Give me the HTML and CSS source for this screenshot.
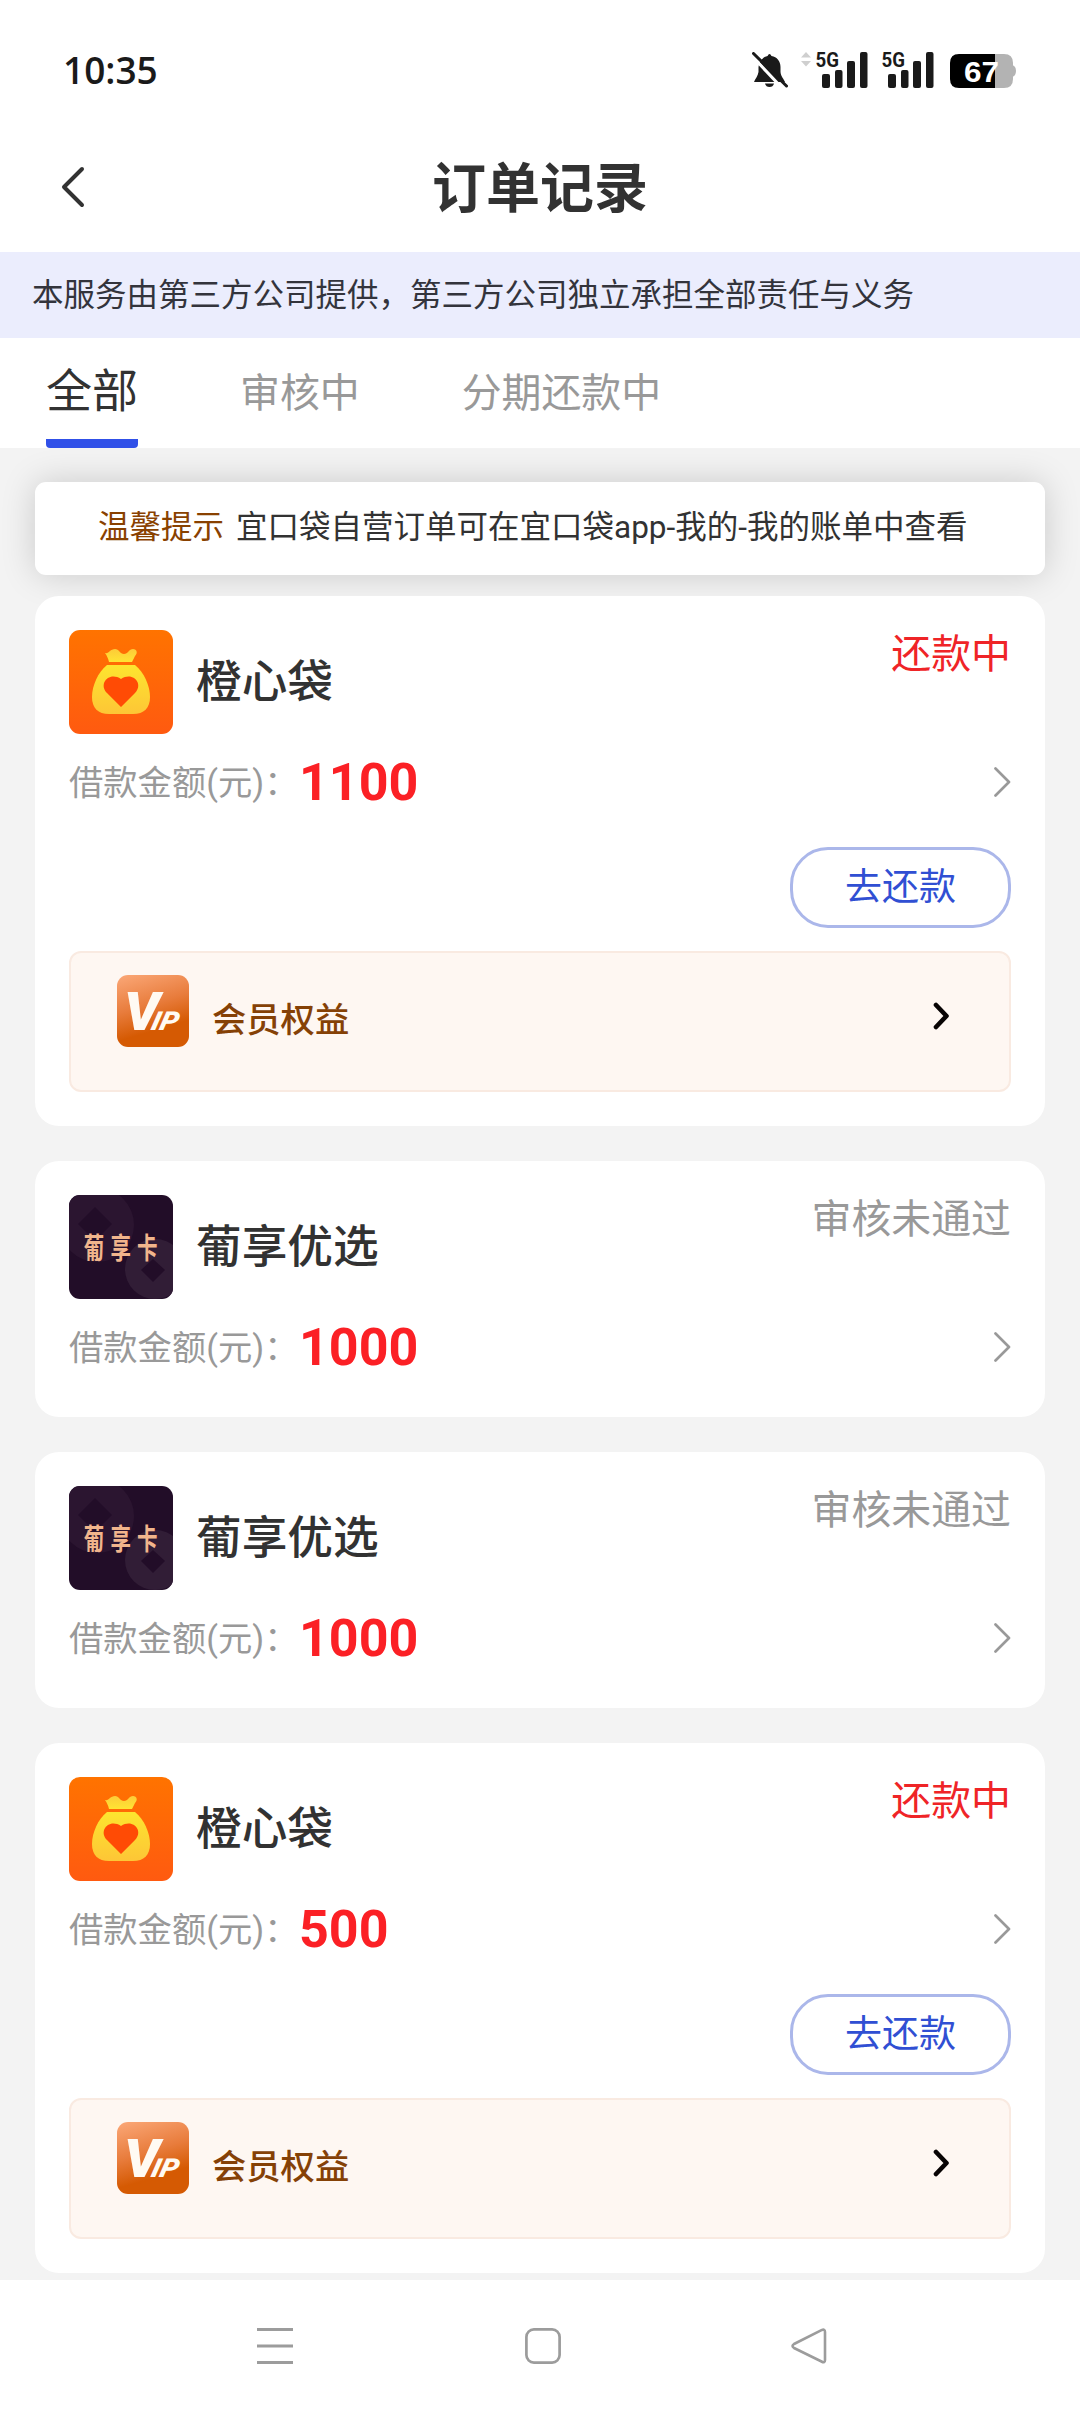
FILE: index.html
```html
<!DOCTYPE html>
<html lang="zh-CN">
<head>
<meta charset="utf-8">
<title>订单记录</title>
<link rel="stylesheet" href="styles.css">
</head>
<body>
<svg class="defs" width="0" height="0">
  <defs>
    <linearGradient id="orange" x1="0" y1="0" x2="0" y2="1"><stop offset="0" stop-color="#ff7300"/><stop offset="1" stop-color="#ff5a10"/></linearGradient>
    <linearGradient id="gold" x1="0" y1="0" x2="0" y2="1"><stop offset="0" stop-color="#fde52f"/><stop offset="1" stop-color="#fdc636"/></linearGradient>
    <linearGradient id="neck" x1="0" y1="0" x2="0" y2="1"><stop offset="0" stop-color="#fdcb38"/><stop offset="1" stop-color="#ffe433"/></linearGradient>
    <linearGradient id="copper" x1="0" y1="0" x2=".3" y2="1"><stop offset="0" stop-color="#fba878"/><stop offset=".5" stop-color="#e87c3c"/><stop offset=".85" stop-color="#d55a03"/></linearGradient>
    <clipPath id="tile"><rect width="104" height="104" rx="11"/></clipPath>
    <symbol id="logo-bag" viewBox="0 0 104 104">
      <rect width="104" height="104" rx="11" fill="url(#orange)"/>
      <path d="M36 23C40 24 41 19 46 19C50 19 51 24 55 24C59 24 60 19 64 19C68 19 69 23 66 26L63 32H40C39 28 38 26 36 23Z" fill="url(#neck)"/>
      <path d="M38 35H66C75 42 81 56 81 67C81 78 75 84 64 84H40C29 84 23 78 23 67C23 56 29 42 38 35Z" fill="url(#gold)"/>
      <path d="M52 77L38 63C29 54 40 41 52 49C64 41 75 54 66 63Z" fill="#ff4b05"/>
    </symbol>
    <symbol id="logo-card" viewBox="0 0 104 104">
      <g clip-path="url(#tile)">
        <rect width="104" height="104" fill="#220d28"/>
        <circle cx="28" cy="30" r="37" fill="#2b1530"/>
        <path d="M26 12L43 29L26 46L9 29Z" fill="#220d28"/>
        <circle cx="86" cy="74" r="30" fill="#311d36"/>
        <path d="M84 64L96 75L84 87L72 75Z" fill="#220d28"/>
      </g>
      <g class="logo-word" transform="translate(0 64) scale(.82 1.16)">
        <text x="18" y="0">葡</text><text x="50.500" y="0">享</text><text x="83" y="0">卡</text>
      </g>
    </symbol>
    <symbol id="logo-vip" viewBox="0 0 72 72">
      <rect width="72" height="72" rx="11" fill="url(#copper)"/>
      <text class="vip-v" transform="translate(7 55) scale(1.05 1)">V</text>
      <text class="vip-ip" transform="translate(33 55) skewX(-14) scale(1.1 1)">IP</text>
    </symbol>
    <symbol id="chevron" viewBox="0 0 17 30"><path d="M1.5 1.5L15 15L1.5 28.5" fill="none" stroke="#999" stroke-width="2.7" stroke-linecap="round" stroke-linejoin="round"/></symbol>
    <symbol id="chevron-bold" viewBox="0 0 17 28"><path d="M3 3L13.5 14L3 25" fill="none" stroke="#080404" stroke-width="4.6" stroke-linecap="round" stroke-linejoin="round"/></symbol>
    <symbol id="bars" viewBox="0 0 52 36">
      <g fill="#1a1a1a"><rect x="6" y="22" width="8" height="14" rx="2"/><rect x="19" y="18" width="7.5" height="18" rx="2"/><rect x="31" y="9" width="8" height="27" rx="2"/><rect x="44" y="0" width="7.5" height="36" rx="2"/></g>
      <text class="net" x="-.5" y="14.7" textLength="23.5" lengthAdjust="spacingAndGlyphs">5G</text>
    </symbol>
  </defs>
</svg>

<header class="statusbar">
  <span class="clock">10:35</span>
  <div class="indicators">
    <svg class="bell" width="36" height="36" viewBox="0 0 36 36">
      <path d="M2 30C3 27 6 24 6.500 20V15C7 9 11 5 15.500 4Q17.500 0 19.500 4C25 5 28.500 9 28.500 15V20C29 25 32 27 33 30Z" fill="#1a1a1a"/>
      <path d="M13 31.500H22Q21 35 17.500 35Q14 35 13 31.500Z" fill="#1a1a1a"/>
      <path d="M-1 3L31 37" stroke="#fff" stroke-width="3"/>
      <path d="M1.500 1.500L34.500 34" stroke="#1a1a1a" stroke-width="3" stroke-linecap="round"/>
    </svg>
    <svg class="traffic" width="10" height="15" viewBox="0 0 10 15"><path d="M0 5.500L5 0L10 5.500ZM0 9H10L5 14.500Z" fill="#cfcfcf"/></svg>
    <svg class="signal" width="52" height="36"><use href="#bars"/></svg>
    <svg class="signal signal-second" width="52" height="36"><use href="#bars"/></svg>
    <svg class="battery" width="67" height="34" viewBox="0 0 67 34">
      <path d="M62 11Q66 12 66 17Q66 22 62 23Z" fill="#b3b3b3"/>
      <path d="M45 0H54Q63 0 63 9V25Q63 34 54 34H45Z" fill="#b3b3b3"/>
      <path d="M9 0H45V34H9Q0 34 0 25V9Q0 0 9 0Z" fill="#000"/>
      <text class="charge" x="14" y="28" textLength="35" lengthAdjust="spacingAndGlyphs">67</text>
    </svg>
  </div>
</header>

<nav class="titlebar">
  <svg class="back" width="26" height="42" viewBox="0 0 26 42"><path d="M22 3L4 21L22 39" fill="none" stroke="#323232" stroke-width="4" stroke-linecap="round" stroke-linejoin="round"/></svg>
  <h1 class="title">订单记录</h1>
</nav>

<p class="notice">本服务由第三方公司提供，第三方公司独立承担全部责任与义务</p>

<div class="tabs">
  <span class="tab tab-active">全部</span>
  <span class="tab">审核中</span>
  <span class="tab">分期还款中</span>
</div>

<main class="content">
  <p class="tip"><span class="tip-label">温馨提示</span><span>宜口袋自营订单可在宜口袋app-我的-我的账单中查看</span></p>

  <section class="orders">
    <article class="card">
      <div class="card-head"><svg class="logo"><use href="#logo-bag"/></svg><h2 class="name">橙心袋</h2><span class="state state-due">还款中</span></div>
      <div class="amount-row"><span class="label">借款金额(元)：</span><strong class="amount">1100</strong><svg class="chevron"><use href="#chevron"/></svg></div>
      <button class="pay">去还款</button>
      <div class="vip"><svg class="vip-logo"><use href="#logo-vip"/></svg><span class="vip-text">会员权益</span><svg class="vip-chevron"><use href="#chevron-bold"/></svg></div>
    </article>

    <article class="card">
      <div class="card-head"><svg class="logo"><use href="#logo-card"/></svg><h2 class="name">葡享优选</h2><span class="state">审核未通过</span></div>
      <div class="amount-row"><span class="label">借款金额(元)：</span><strong class="amount">1000</strong><svg class="chevron"><use href="#chevron"/></svg></div>
    </article>

    <article class="card">
      <div class="card-head"><svg class="logo"><use href="#logo-card"/></svg><h2 class="name">葡享优选</h2><span class="state">审核未通过</span></div>
      <div class="amount-row"><span class="label">借款金额(元)：</span><strong class="amount">1000</strong><svg class="chevron"><use href="#chevron"/></svg></div>
    </article>

    <article class="card">
      <div class="card-head"><svg class="logo"><use href="#logo-bag"/></svg><h2 class="name">橙心袋</h2><span class="state state-due">还款中</span></div>
      <div class="amount-row"><span class="label">借款金额(元)：</span><strong class="amount">500</strong><svg class="chevron"><use href="#chevron"/></svg></div>
      <button class="pay">去还款</button>
      <div class="vip"><svg class="vip-logo"><use href="#logo-vip"/></svg><span class="vip-text">会员权益</span><svg class="vip-chevron"><use href="#chevron-bold"/></svg></div>
    </article>
  </section>
</main>

<footer class="navbar">
  <svg width="36" height="36" viewBox="0 0 36 36"><path d="M0 1.500H36M0 18H36M0 34.500H36" stroke="#9c9c9c" stroke-width="3"/></svg>
  <svg width="36" height="36" viewBox="0 0 36 36"><rect x="1.400" y="1.400" width="33.200" height="33.200" rx="7.500" fill="none" stroke="#9c9c9c" stroke-width="2.700"/></svg>
  <svg class="nav-back" width="36" height="36" viewBox="0 0 36 36"><path d="M30.500 2.200Q34 0.500 34 4V32Q34 35.500 30.500 33.500L3 20Q0 18 3 16Z" fill="none" stroke="#9c9c9c" stroke-width="2.600" stroke-linejoin="round"/></svg>
</footer>
</body>
</html>
```
FILE: styles.css
```css
* { box-sizing: border-box; }

body {
  display: flex;
  flex-direction: column;
  width: 1080px;
  height: 2412px;
  margin: 0;
  overflow: hidden;
  background: #fff;
  color: #323232;
  font-family: Roboto, "Noto Sans CJK SC", sans-serif;
}

h1, h2, p { margin: 0; }
svg { display: block; flex: none; }
.defs { position: absolute; }

/* System status bar */
.statusbar {
  display: flex;
  justify-content: space-between;
  height: 136px;
  padding: 52px 63px 0 63px;
}
.clock {
  height: 36px;
  color: #1a1a1a;
  font: 600 37px/35px "Open Sans", sans-serif;
}
.indicators { display: flex; align-items: flex-start; }
.traffic { margin-left: 13px; }
.signal { margin-left: 5px; overflow: visible; }
.signal-second { margin-left: 14px; }
.battery { margin: 2px 0 0 16px; }
.net { font: 700 21px Roboto, sans-serif; fill: #1a1a1a; }
.charge { font: 700 30px "Liberation Sans", sans-serif; fill: #fff; }

/* Page title */
.titlebar {
  display: grid;
  grid-template-columns: 1fr auto 1fr;
  align-items: center;
  height: 116px;
  padding: 0 60px 14px;
}
.title {
  padding-top: 5px;
  color: #323232;
  font-size: 54px;
  font-weight: 700;
  line-height: 72px;
}

.notice {
  height: 86px;
  padding-left: 32px;
  background: #ebedfd;
  color: #33343c;
  font-size: 31.5px;
  line-height: 88px;
  white-space: nowrap;
}

.tabs {
  display: flex;
  gap: 102px;
  height: 110px;
  padding-left: 46px;
}
.tab {
  color: #999;
  font-size: 39.9px;
  line-height: 112px;
}
.tab-active {
  background: linear-gradient(#3050e8, #3050e8) bottom / 100% 9px no-repeat;
  border-radius: 4px;
  color: #323232;
  font-size: 46px;
  line-height: 107px;
}

/* Order list */
.content {
  flex: 1;
  padding: 34px 35px 0;
  background: #f3f3f3;
}
.tip {
  display: flex;
  gap: 12px;
  height: 93px;
  padding-left: 63px;
  border-radius: 11px;
  background: #fff;
  box-shadow: 0 0 34px rgba(0, 0, 0, .17);
  font-size: 31.5px;
  line-height: 92px;
  white-space: nowrap;
}
.tip-label { color: #894100; }

.orders {
  position: relative;
  display: flex;
  flex-direction: column;
  gap: 35px;
  padding-top: 21px;
}
.card {
  display: flex;
  flex-direction: column;
  padding: 34px;
  border-radius: 24px;
  background: #fff;
}
.card-head { display: flex; height: 104px; }
.logo { width: 104px; height: 104px; }
.logo-word { font: 700 25px "Noto Sans CJK SC", sans-serif; fill: #f1b58c; }
.name {
  margin-left: 23px;
  font-size: 45.7px;
  font-weight: 500;
  line-height: 105px;
}
.state {
  margin-left: auto;
  color: #999;
  font-size: 39.9px;
  line-height: 50px;
}
.state-due { color: #ef2427; }

.amount-row {
  display: flex;
  align-items: center;
  height: 72px;
  margin-top: 12px;
}
.label {
  width: 230px;
  margin-top: -5px;
  color: #999;
  font-size: 34.3px;
  white-space: nowrap;
}
.amount {
  color: #fb2025;
  font-size: 52px;
  font-weight: 700;
}
.chevron { width: 17px; height: 30px; margin-left: auto; }

.pay {
  align-self: flex-end;
  width: 221px;
  height: 81px;
  margin-top: 29px;
  padding: 0;
  border: 3px solid #abb7ea;
  border-radius: 38px;
  background: #fff;
  color: #304fd3;
  font: 400 37px/70px Roboto, "Noto Sans CJK SC", sans-serif;
}

.vip {
  display: flex;
  align-items: flex-start;
  height: 141px;
  margin-top: 23px;
  padding: 22px 59px 0 46px;
  border: 2px solid #f9eae1;
  border-radius: 12px;
  background: #fef7f2;
}
.vip-logo { width: 72px; height: 72px; }
.vip-text {
  margin-left: 23px;
  color: #854106;
  font-size: 34.3px;
  font-weight: 500;
  line-height: 90px;
}
.vip-chevron { width: 17px; height: 28px; margin: 27px 0 0 auto; }
.vip-v { font: italic 900 53px Roboto, sans-serif; fill: #fffaf3; }
.vip-ip { font: italic 900 26px Roboto, sans-serif; fill: #fffaf3; }

/* System navigation */
.navbar {
  display: flex;
  align-items: center;
  gap: 232px;
  height: 132px;
  padding-left: 257px;
  background: #fff;
}
.nav-back { margin-left: -2px; }
```
